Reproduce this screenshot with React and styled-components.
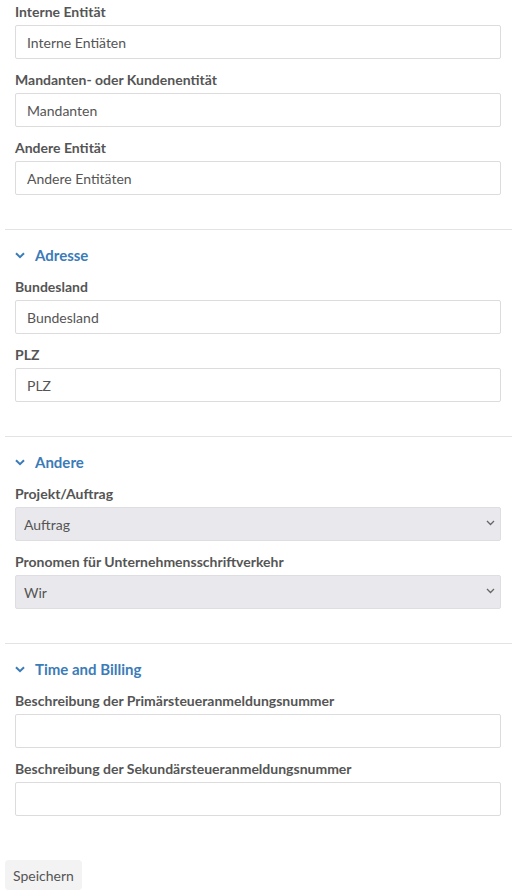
import React from 'react'
import styled, { createGlobalStyle } from 'styled-components'

const GlobalStyle = createGlobalStyle`
  body {
    margin: 0;
    font-family: Lato, 'Open Sans', sans-serif;
    font-size: 14px;
    color: #555;
    background: #fff;
  }
`

const Page = styled.div`
  padding: 2px 0 0 5px;
`

const Section = styled.div`
  padding: ${props => props.first ? '0' : '15px'} 11px 0 10px;
`

const Divider = styled.hr`
  margin: 34px 0 0 0;
  border: none;
  border-top: 1px solid #e3e3e3;
`

const SectionTitle = styled.div`
  display: flex;
  align-items: center;
  gap: 10px;
  height: 20px;
  margin-bottom: 12px;
  color: #3b7bb8;
  font-weight: 700;
  font-size: 15px;
`

const Field = styled.div`
  & + & {
    margin-top: 11px;
  }
`

const Label = styled.label`
  display: block;
  font-weight: 700;
  font-size: 14px;
  line-height: 20px;
  margin-bottom: 3px;
  color: #555;
`

const Input = styled.input`
  display: block;
  box-sizing: border-box;
  width: 100%;
  height: 34px;
  padding: 0 11px;
  border: 1px solid #dcdcdc;
  border-radius: 2px;
  font-family: inherit;
  font-size: 14px;
  color: #555;
  background: #fff;
  &::placeholder {
    color: #555;
  }
`

const SelectWrap = styled.div`
  position: relative;
`

const Select = styled.select`
  display: block;
  box-sizing: border-box;
  width: 100%;
  height: 34px;
  padding: 0 8px;
  border: 1px solid #dedee2;
  border-radius: 2px;
  appearance: none;
  font-family: inherit;
  font-size: 14px;
  color: #555;
  background: #e9e9ed;
`

const SelectArrow = styled.svg`
  position: absolute;
  right: 6px;
  top: 13px;
  pointer-events: none;
`

const SaveButton = styled.button`
  margin-top: 44px;
  height: 30px;
  padding: 0 8px;
  border: none;
  border-radius: 4px;
  background: #f3f3f3;
  font-family: inherit;
  font-size: 14px;
  color: #555;
`

const Chevron = () => (
  <svg width="10" height="7" viewBox="0 0 10 7" fill="none">
    <path d="M1 1.2 L5 5.2 L9 1.2" stroke="#3b7bb8" strokeWidth="2" />
  </svg>
)

const TextField = ({ label, placeholder }) => (
  <Field>
    <Label>{label}</Label>
    <Input placeholder={placeholder} />
  </Field>
)

const SelectField = ({ label, value }) => (
  <Field>
    <Label>{label}</Label>
    <SelectWrap>
      <Select defaultValue={value}>
        <option>{value}</option>
      </Select>
      <SelectArrow width="9" height="6" viewBox="0 0 9 6" fill="none">
        <path d="M1 1 L4.5 4.5 L8 1" stroke="#666" strokeWidth="1.3" />
      </SelectArrow>
    </SelectWrap>
  </Field>
)

const App = () => {
  return (
    <Page>
      <GlobalStyle />
      <Section first>
        <TextField label="Interne Entität" placeholder="Interne Entiäten" />
        <TextField label="Mandanten- oder Kundenentität" placeholder="Mandanten" />
        <TextField label="Andere Entität" placeholder="Andere Entitäten" />
      </Section>
      <Divider />
      <Section>
        <SectionTitle><Chevron />Adresse</SectionTitle>
        <TextField label="Bundesland" placeholder="Bundesland" />
        <TextField label="PLZ" placeholder="PLZ" />
      </Section>
      <Divider />
      <Section>
        <SectionTitle><Chevron />Andere</SectionTitle>
        <SelectField label="Projekt/Auftrag" value="Auftrag" />
        <SelectField label="Pronomen für Unternehmensschriftverkehr" value="Wir" />
      </Section>
      <Divider />
      <Section>
        <SectionTitle><Chevron />Time and Billing</SectionTitle>
        <TextField label="Beschreibung der Primärsteueranmeldungsnummer" placeholder="" />
        <TextField label="Beschreibung der Sekundärsteueranmeldungsnummer" placeholder="" />
      </Section>
      <SaveButton>Speichern</SaveButton>
    </Page>
  )
}

export default App
